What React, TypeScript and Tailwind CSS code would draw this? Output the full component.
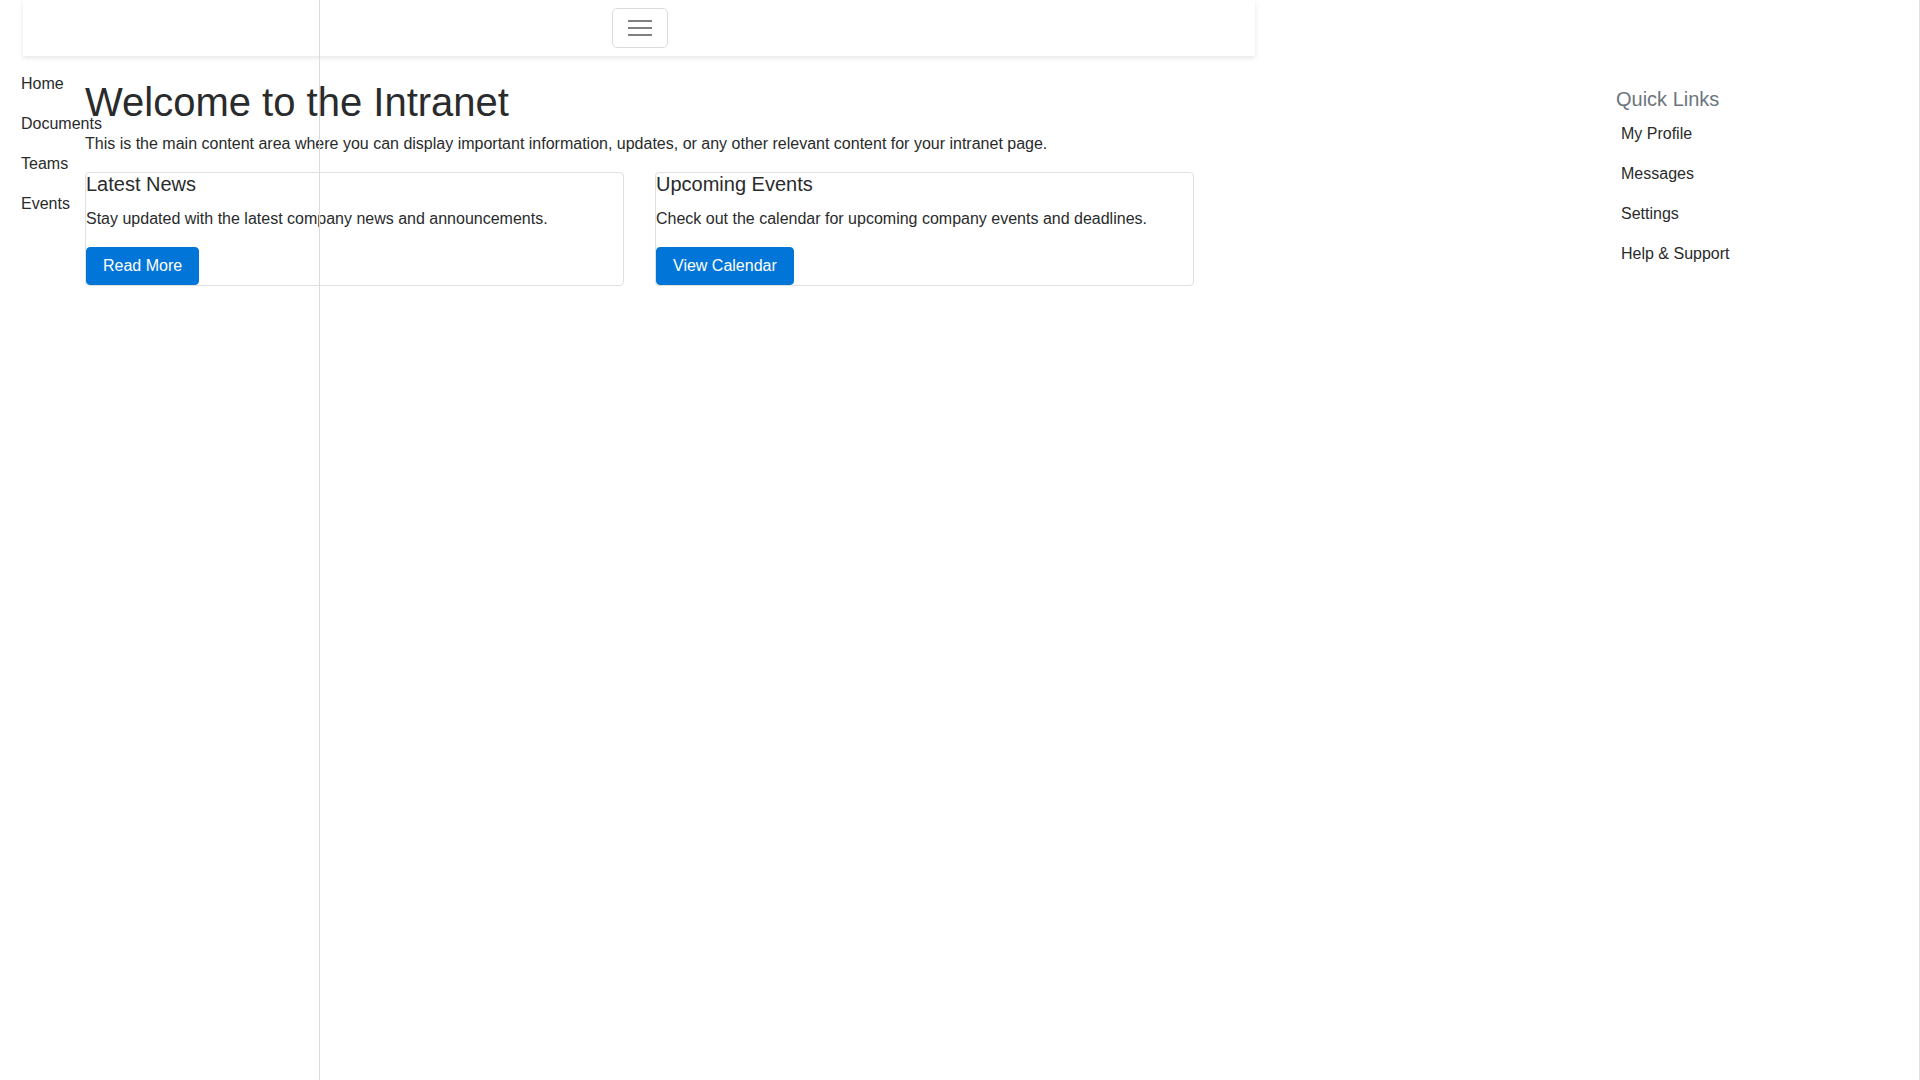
import React from 'react';

const sideLinks = ['Home', 'Documents', 'Teams', 'Events'];
const quickLinks = ['My Profile', 'Messages', 'Settings', 'Help & Support'];

const cards = [
  {
    title: 'Latest News',
    text: 'Stay updated with the latest company news and announcements.',
    action: 'Read More',
  },
  {
    title: 'Upcoming Events',
    text: 'Check out the calendar for upcoming company events and deadlines.',
    action: 'View Calendar',
  },
];

export default function App() {
  return (
    <div className="relative min-h-screen bg-white text-[#292b2c] border-r border-[#dee2e6] font-['Liberation_Sans',Arial,sans-serif] text-base leading-6">
      {/* Top navbar */}
      <nav className="ml-[23px] w-[1232px] h-[56px] flex items-center justify-center bg-white shadow-[0_2px_5px_rgba(0,0,0,0.1)]">
        <button
          type="button"
          className="ml-[2px] w-[56px] h-[40px] flex flex-col items-center justify-center gap-[5px] border border-[#dcdcdc] rounded-[5px]"
        >
          <span className="block w-[24px] h-[2px] bg-[#808080]" />
          <span className="block w-[24px] h-[2px] bg-[#808080]" />
          <span className="block w-[24px] h-[2px] bg-[#808080]" />
        </button>
      </nav>

      <div className="flex">
        {/* Main content */}
        <main className="pl-[85px] pt-[22px] flex-1">
          <h1 className="text-[40px] leading-[48px] mb-[6px] font-normal">Welcome to the Intranet</h1>
          <p className="mb-4">
            This is the main content area where you can display important information, updates, or any other relevant content for your intranet page.
          </p>
          <div className="grid grid-cols-[539px_539px] gap-[31px]">
            {cards.map((card) => (
              <div key={card.title} className="border border-[#e0e0e0] rounded-[4px]">
                <h5 className="text-[20px] leading-[22px] mb-[12px]">{card.title}</h5>
                <p className="mb-4">{card.text}</p>
                <button
                  type="button"
                  className="px-4 py-[6px] bg-[#0275d8] text-white border border-[#0275d8] rounded-[4px] leading-6"
                >
                  {card.action}
                </button>
              </div>
            ))}
          </div>
        </main>

        {/* Quick links */}
        <aside className="w-[319px] pl-4 pt-[31px]">
          <h5 className="text-[20px] leading-6 text-[#6c757d] mb-[3px]">Quick Links</h5>
          <ul>
            {quickLinks.map((l) => (
              <li key={l}>
                <a href="#" className="block pl-[5px] py-2 leading-6">
                  {l}
                </a>
              </li>
            ))}
          </ul>
        </aside>
      </div>

      {/* Left sidebar overlays the page */}
      <aside className="absolute left-0 top-0 bottom-0 w-[320px] border-r border-[#dcdcdc] pt-[64px] pl-[21px]">
        <ul>
          {sideLinks.map((l) => (
            <li key={l}>
              <a href="#" className="block py-2 leading-6">
                {l}
              </a>
            </li>
          ))}
        </ul>
      </aside>
    </div>
  );
}
